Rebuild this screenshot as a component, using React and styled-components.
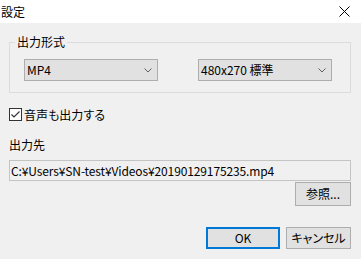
import React from "react";
import styled, { createGlobalStyle } from "styled-components";

const Global = createGlobalStyle`
  html, body { margin: 0; padding: 0; background: #f0f0f0; }
  body {
    width: 361px; height: 259px; overflow: hidden;
    font-family: "Noto Sans CJK JP", "Noto Sans", sans-serif;
    font-size: 12px; color: #000;
    font-feature-settings: "palt";
  }
  * { box-sizing: border-box; }
`;

const Window = styled.div`
  display: flex;
  flex-direction: column;
  width: 361px;
  height: 259px;
  background: #f0f0f0;
`;

const TitleBar = styled.div`
  height: 23px;
  background: #fff;
  display: flex;
  align-items: center;
  justify-content: space-between;
  padding: 0 11px 0 1px;
`;

const Title = styled.span`
  font-size: 12px;
  line-height: 14px;
`;

const Body = styled.div`
  display: flex;
  flex-direction: column;
  padding: 0 10px 0 9px;
`;

const Group = styled.fieldset`
  margin: 12px 0 0 0;
  padding: 0;
  border: 1px solid #dcdcdc;
  min-width: 0;
`;

const Legend = styled.legend`
  margin-left: 5px;
  padding: 0 2px;
  font-size: 12px;
  line-height: 14px;
`;

const ComboRow = styled.div`
  display: flex;
  gap: 40px;
  padding: 10px 18px 11px 14px;
`;

const Combo = styled.div`
  width: 134px;
  height: 22px;
  background: #e1e1e1;
  border: 1px solid #adadad;
  display: flex;
  align-items: center;
  justify-content: space-between;
  padding: 0 5px 0 2px;
  line-height: 14px;
`;

const CheckRow = styled.label`
  margin-top: 15px;
  display: flex;
  align-items: center;
  gap: 2px;
  height: 13px;
  line-height: 14px;
`;

const Box = styled.span`
  width: 13px;
  height: 13px;
  border: 1px solid #333;
  background: #fff;
  display: flex;
  align-items: center;
  justify-content: center;
`;

const FieldLabel = styled.div`
  margin-top: 17px;
  line-height: 14px;
`;

const TextField = styled.div`
  margin-top: 8px;
  height: 21px;
  border: 1px solid #c4c4c4;
  background: #f0f0f0;
  display: flex;
  align-items: center;
  padding-left: 1px;
  line-height: 14px;
  letter-spacing: -0.12px;
  white-space: nowrap;
  overflow: hidden;
`;

const Button = styled.button`
  font-family: inherit;
  font-size: 12px;
  font-feature-settings: "palt";
  line-height: 14px;
  color: #000;
  background: #e1e1e1;
  border: ${(p) => (p.$primary ? "2px solid #0078d7" : "1px solid #adadad")};
  width: ${(p) => p.$w}px;
  height: ${(p) => p.$h}px;
  padding: 0;
  margin: 0;
  border-radius: 0;
`;

const BrowseRow = styled.div`
  margin-top: 1px;
  display: flex;
  justify-content: flex-end;
`;

const ActionRow = styled.div`
  margin-top: 21px;
  display: flex;
  justify-content: flex-end;
  gap: 6px;
`;

const Chevron = () => (
  <svg width="8" height="5" viewBox="0 0 8 5">
    <polyline points="0.5,0.5 4,4 7.5,0.5" fill="none" stroke="#606060" strokeWidth="1" />
  </svg>
);

const CloseIcon = () => (
  <svg width="11" height="11" viewBox="0 0 11 11">
    <path d="M0.5 0.5 L10.5 10.5 M10.5 0.5 L0.5 10.5" stroke="#000" strokeWidth="1" fill="none" />
  </svg>
);

const CheckMark = () => (
  <svg width="11" height="11" viewBox="0 0 11 11">
    <polyline points="1.5,5.5 4,8 9.5,2.5" fill="none" stroke="#333" strokeWidth="1.2" />
  </svg>
);

export default function App() {
  return (
    <>
      <Global />
      <Window>
        <TitleBar>
          <Title>設定</Title>
          <CloseIcon />
        </TitleBar>
        <Body>
          <Group>
            <Legend>出力形式</Legend>
            <ComboRow>
              <Combo>
                <span>MP4</span>
                <Chevron />
              </Combo>
              <Combo>
                <span>480x270 標準</span>
                <Chevron />
              </Combo>
            </ComboRow>
          </Group>
          <CheckRow>
            <Box>
              <CheckMark />
            </Box>
            <span>音声も出力する</span>
          </CheckRow>
          <FieldLabel>出力先</FieldLabel>
          <TextField>C:¥Users¥SN-test¥Videos¥20190129175235.mp4</TextField>
          <BrowseRow>
            <Button $w={56} $h={24}>参照...</Button>
          </BrowseRow>
          <ActionRow>
            <Button $primary $w={74} $h={22}>OK</Button>
            <Button $w={65} $h={22}>キャンセル</Button>
          </ActionRow>
        </Body>
      </Window>
    </>
  );
}
